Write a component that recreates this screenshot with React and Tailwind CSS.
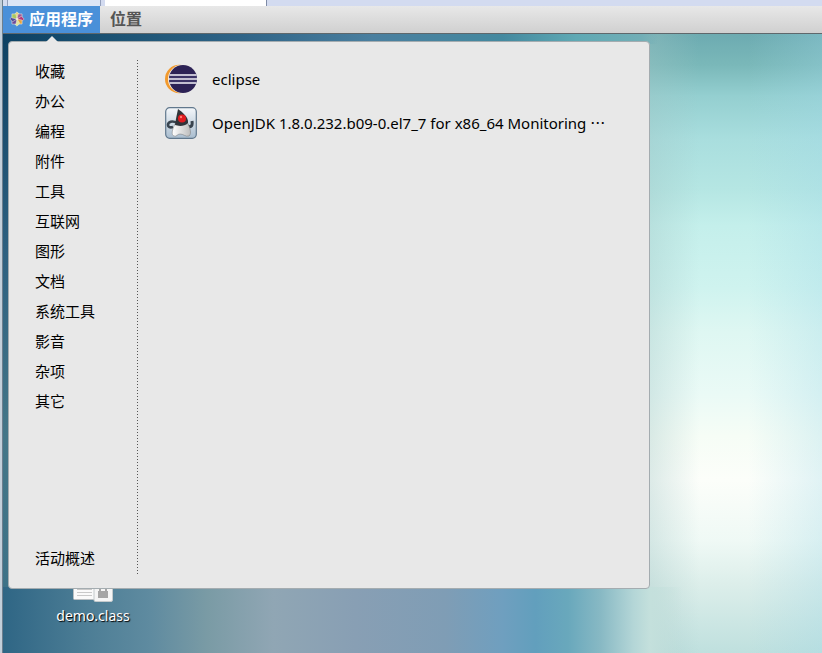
const categories = ['收藏', '办公', '编程', '附件', '工具', '互联网', '图形', '文档', '系统工具', '影音', '杂项', '其它'];

const petals = [
  { angle: 0, color: '#e6d37a' },
  { angle: 45, color: '#9a5a9c' },
  { angle: 90, color: '#b5387a' },
  { angle: 135, color: '#e8a33c' },
  { angle: 180, color: '#dfe6a0' },
  { angle: 225, color: '#6a4a9c' },
  { angle: 270, color: '#52509c' },
  { angle: 315, color: '#a8c860' },
];

function DistroLogo() {
  return (
    <svg className="size-4 shrink-0" viewBox="0 0 16 16" aria-hidden="true">
      {petals.map(({ angle, color }) => (
        <path key={angle} d="M8 8 L5.2 3.6 L8 .8 L10.8 3.6 Z" fill={color} stroke="#f3ead8" strokeWidth=".5" transform={`rotate(${angle} 8 8)`} />
      ))}
      <circle cx="8" cy="8" r="1" fill="#f6edda" />
    </svg>
  );
}

function EclipseIcon() {
  return (
    <svg className="size-8 shrink-0" viewBox="0 0 32 32" aria-hidden="true">
      <circle cx="14.200" cy="16" r="14.200" fill="#f29a2e" />
      <circle cx="17.200" cy="16" r="14.200" fill="#f6efe4" />
      <circle cx="18" cy="16" r="14" fill="#2c2255" />
      <path d="M4.500 12H31.500M4 16H32M4.500 20H31.500" stroke="#f4f4fa" strokeWidth="1.600" />
      <path d="M4 14H32M4 18H32" stroke="#4b4478" strokeWidth="1.200" />
    </svg>
  );
}

function DukeIcon() {
  return (
    <svg className="size-8 shrink-0" viewBox="0 0 32 32" aria-hidden="true">
      <defs>
        <linearGradient id="tile" x1="0" y1="0" x2="0" y2="1">
          <stop offset="0" stopColor="#f4f7fa" />
          <stop offset="1" stopColor="#a9bdcf" />
        </linearGradient>
        <linearGradient id="belly" x1="0" y1="0" x2="1" y2="0">
          <stop offset="0" stopColor="#ffffff" />
          <stop offset="1" stopColor="#bdbdbd" />
        </linearGradient>
      </defs>
      <rect x=".7" y=".7" width="30.600" height="30.600" rx="4" fill="url(#tile)" stroke="#61788d" strokeWidth="1.200" />
      <path d="M12 16 C7 13 3 15 3 18 C3 20 5 21 8 20" fill="none" stroke="#39444f" strokeWidth="2.600" />
      <path d="M21 18 C25 21 28 20 27 14" fill="none" stroke="#39444f" strokeWidth="3" />
      <path d="M10 17 C7 23 6 28 9 29 C12 30 12 27 15 27 C19 27 20 30 24 29 C27 27 25 20 22 15 Z" fill="url(#belly)" stroke="#777" strokeWidth=".5" />
      <path d="M13 2 C17 5 24 10 23 16 C19 20 13 19 10 18 C11 11 12 7 13 2 Z" fill="#30343a" />
      <circle cx="17" cy="11.500" r="4" fill="#e01b20" />
      <circle cx="16" cy="10" r="1.200" fill="#ff7b72" />
    </svg>
  );
}

function FileIcon() {
  return (
    <svg className="h-12 w-10" viewBox="0 0 40 48" aria-hidden="true">
      <rect x=".5" y=".5" width="36" height="45" rx="1" fill="#fafafa" stroke="#b9bfc2" />
      <path d="M4 35.500H19M4 38.500H19M4 41.500H19" stroke="#c9c9c9" />
      <rect x="21" y="28" width="18.500" height="19.500" rx="1.500" fill="#f5f5f5" stroke="#c4cacc" />
      <rect x="25" y="37" width="10" height="7" fill="#a5a5a5" />
      <path d="M27 37V33H33V37" fill="none" stroke="#a5a5a5" strokeWidth="2" />
    </svg>
  );
}

export default function App() {
  return (
    <div className="flex min-h-screen border-l-2 border-[#c3cfda] font-['Noto_Sans','Noto_Sans_CJK_SC',sans-serif] text-black">
      <div className="flex min-w-0 grow flex-col border-l border-[#6d7f8e]">
        <div className="flex h-[6px] shrink-0 bg-[#d3dbf0]">
          <div className="ml-1 w-[94px] border-x border-[#94a0bc] bg-[#dce5f6]" />
          <div className="ml-1 w-[162px] border-r border-[#7f8ba6] bg-white" />
        </div>

        <header className="flex h-7 shrink-0 border-b border-[#5f686c] bg-linear-to-b from-[#e8e8e8] to-[#d0d0d0] text-[16px] leading-6 font-bold">
          <button type="button" className="flex w-[97px] items-center gap-1 bg-[#4a90d9] pb-[2px] pl-[6px] text-white">
            <DistroLogo />
            <span className="whitespace-nowrap">应用程序</span>
          </button>
          <button type="button" className="px-[10px] pb-[2px] text-[#555]">位置</button>
        </header>

        <main className="relative grow overflow-hidden bg-[linear-gradient(90deg,#2f6685_0%,#4c7d95_10%,#5f8ba0_18%,#7a9ba5_25%,#90a6b4_33%,#889fb4_43%,#7f9db5_54%,#6f9fbf_61%,#629fbd_65%,#69a8bc_69%,#88b9c4_73%,#b4d6d7_77%,#c4e0dc_79%,#c8e2de00_83%),linear-gradient(90deg,#0d4163_0%,#1d5475_15%,#2f6487_29%,#4a7f9f_45%,#44899f_61%,#5fa9b4_70%,#72aeb6_78%,#72aeb600_80%),linear-gradient(180deg,#0d4163_0%,#2d6080_35%,#447688_65%,#3a7087_100%),linear-gradient(90deg,#a0c4c466_78%,#a0c4c400_85%,#9fd8e800_91%,#9fd8e84d_100%),linear-gradient(180deg,#6dabb1_0%,#7ab8b9_5%,#94cfd0_10%,#a9dede_17%,#b5e6e3_25%,#c4efeb_31%,#cff3ef_41%,#def7f2_48%,#eafaf6_58%,#f6fdf6_65%,#fcfefa_72%,#eff9f5_82%,#dceeea_89%,#bfe0de_100%)] bg-[length:100%_66px,100%_10px,10px_100%,100%_100%,100%_100%] bg-[position:bottom,top,left,left,left] bg-no-repeat">
          <figure className="absolute top-[520px] left-[50px] flex w-20 flex-col items-center">
            <FileIcon />
            <figcaption className="mt-0.5 text-[14px] leading-6 text-white [text-shadow:1px_1px_1px_#000]">demo.class</figcaption>
          </figure>

          <div className="absolute top-[7px] left-[5px] flex min-h-[548px] w-[642px] rounded-[4px] border border-[#a4acb0] bg-[#e8e8e8] pt-[14px] pb-[14px]">
            <span className="absolute -top-[6px] left-[37px] border-x-[6px] border-b-[6px] border-x-transparent border-b-[#e8e8e8]" />
            <nav className="flex w-[128px] shrink-0 flex-col pb-px text-[15px] leading-[30px]">
              {categories.map((name) => (
                <button key={name} type="button" className="pl-[26px] text-left">{name}</button>
              ))}
              <button type="button" className="mt-auto pl-[26px] text-left">活动概述</button>
            </nav>
            <div className="mt-1 w-px shrink-0 bg-[repeating-linear-gradient(180deg,#555_0px,#555_1px,transparent_1px,transparent_3px)]" />
            <ul className="min-w-0 grow pt-px pl-[27px] text-[15px]">
              <li>
                <button type="button" className="flex h-11 items-center gap-[15px]">
                  <EclipseIcon />
                  <span>eclipse</span>
                </button>
              </li>
              <li>
                <button type="button" className="flex h-11 items-center gap-[15px]">
                  <DukeIcon />
                  <span className="whitespace-nowrap">
                    OpenJDK 1.8.0.232.b09-0.el7_7 for x86_64 Monitoring <span lang="zh-CN" className="font-['Noto_Sans_CJK_SC',sans-serif] leading-none">…</span>
                  </span>
                </button>
              </li>
            </ul>
          </div>
        </main>
      </div>
    </div>
  );
}
